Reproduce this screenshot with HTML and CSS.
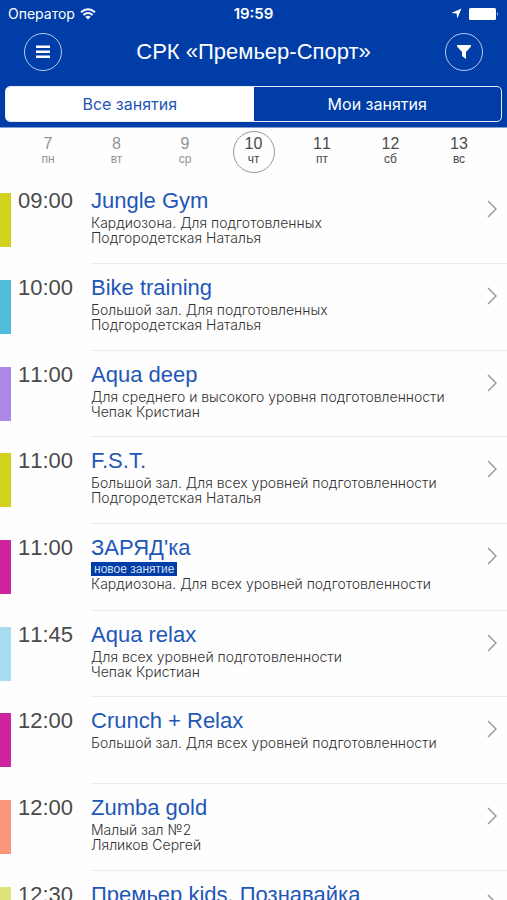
FILE: index.html
```html
<!DOCTYPE html>
<html lang="ru">
<head>
<meta charset="utf-8">
<meta name="viewport" content="width=device-width, initial-scale=1">
<title>СРК «Премьер-Спорт»</title>
<link rel="stylesheet" href="styles.css">
</head>
<body>
<header class="top">
  <div class="status">
    <div class="carrier"><span>Оператор</span>
      <svg width="16" height="12" viewBox="0 0 16 12" fill="none" stroke="#fff" stroke-width="2" aria-hidden="true"><path d="M1 4.3Q8-1.8 15 4.3M3.4 7Q8 3 12.600 7"/><path d="M5.300 8.800Q8 6.500 10.700 8.800L8 11.500Z" fill="#fff" stroke="none"/></svg>
    </div>
    <time class="clock">19:59</time>
    <div class="power">
      <svg width="11" height="11" viewBox="0 0 11 11" fill="#fff" aria-hidden="true"><path d="M10.500.5L6.300 10.500 5.600 5.400.3 4.900Z"/></svg>
      <svg width="30" height="12" viewBox="0 0 30 12" fill="#fff" aria-hidden="true"><rect width="27" height="12" rx="1.500"/><path d="M28 4Q29.800 6 28 8Z"/></svg>
    </div>
  </div>
  <div class="bar">
    <button class="round" aria-label="Меню"><svg width="16" height="14" viewBox="0 0 16 14" fill="#fff"><path d="M1 .5h14v2.500H1zM1 5.500h14v2.500H1zM1 10.500h14v2.500H1z"/></svg></button>
    <h1>СРК «Премьер-Спорт»</h1>
    <button class="round" aria-label="Фильтр"><svg width="16" height="16" viewBox="0 0 16 16" fill="#fff"><path d="M1 1h14v1.500L10 8v7l-4-3V8L1 2.500Z"/></svg></button>
  </div>
  <div class="tabs">
    <button class="tab active">Все занятия</button>
    <button class="tab">Мои занятия</button>
  </div>
</header>
<nav class="days" aria-label="Дни недели">
  <button class="day past"><b>7</b><span>пн</span></button>
  <button class="day past"><b>8</b><span>вт</span></button>
  <button class="day past"><b>9</b><span>ср</span></button>
  <button class="day current"><b>10</b><span>чт</span></button>
  <button class="day"><b>11</b><span>пт</span></button>
  <button class="day"><b>12</b><span>сб</span></button>
  <button class="day"><b>13</b><span>вс</span></button>
</nav>
<main class="list">
  <a href="#" class="row lime"><time>09:00</time><div class="info"><div><h2>Jungle Gym</h2><p>Кардиозона. Для подготовленных</p><p>Подгородетская Наталья</p></div><svg class="chev" viewBox="0 0 10 18"><path d="M1 1l8 8-8 8"/></svg></div></a>
  <a href="#" class="row cyan"><time>10:00</time><div class="info"><div><h2>Bike training</h2><p>Большой зал. Для подготовленных</p><p>Подгородетская Наталья</p></div><svg class="chev" viewBox="0 0 10 18"><path d="M1 1l8 8-8 8"/></svg></div></a>
  <a href="#" class="row violet"><time>11:00</time><div class="info"><div><h2>Aqua deep</h2><p>Для среднего и высокого уровня подготовленности</p><p>Чепак Кристиан</p></div><svg class="chev" viewBox="0 0 10 18"><path d="M1 1l8 8-8 8"/></svg></div></a>
  <a href="#" class="row lime"><time>11:00</time><div class="info"><div><h2>F.S.T.</h2><p>Большой зал. Для всех уровней подготовленности</p><p>Подгородетская Наталья</p></div><svg class="chev" viewBox="0 0 10 18"><path d="M1 1l8 8-8 8"/></svg></div></a>
  <a href="#" class="row magenta"><time>11:00</time><div class="info"><div><h2>ЗАРЯД'ка</h2><span class="badge">новое занятие</span><p>Кардиозона. Для всех уровней подготовленности</p></div><svg class="chev" viewBox="0 0 10 18"><path d="M1 1l8 8-8 8"/></svg></div></a>
  <a href="#" class="row sky"><time>11:45</time><div class="info"><div><h2>Aqua relax</h2><p>Для всех уровней подготовленности</p><p>Чепак Кристиан</p></div><svg class="chev" viewBox="0 0 10 18"><path d="M1 1l8 8-8 8"/></svg></div></a>
  <a href="#" class="row magenta"><time>12:00</time><div class="info"><div><h2>Crunch + Relax</h2><p>Большой зал. Для всех уровней подготовленности</p></div><svg class="chev" viewBox="0 0 10 18"><path d="M1 1l8 8-8 8"/></svg></div></a>
  <a href="#" class="row coral"><time>12:00</time><div class="info"><div><h2>Zumba gold</h2><p>Малый зал №2</p><p>Ляликов Сергей</p></div><svg class="chev" viewBox="0 0 10 18"><path d="M1 1l8 8-8 8"/></svg></div></a>
  <a href="#" class="row lemon"><time>12:30</time><div class="info"><div><h2>Премьер kids. Познавайка</h2></div><svg class="chev" viewBox="0 0 10 18"><path d="M1 1l8 8-8 8"/></svg></div></a>
</main>
</body>
</html>
```
FILE: styles.css
```css
* { box-sizing: border-box; margin: 0; padding: 0; }
html { height: 100%; }
body {
  display: flex;
  flex-direction: column;
  height: 100vh;
  overflow: hidden;
  background: #fefefe;
  color: #4a4a4a;
  font-family: "Liberation Sans", sans-serif;
}
button { border: 0; background: none; color: inherit; font: inherit; }
svg { display: block; }

.top { flex: none; padding: 0 5px 5px; background: #003da6; color: #fff; border-bottom: 1px solid #7f9ed2; }
.status {
  display: grid;
  grid-template-columns: 1fr auto 1fr;
  align-items: center;
  height: 27px;
  padding: 0 3px;
  font: 15px/16px Inter, sans-serif;
}
.carrier { display: flex; align-items: center; gap: 5px; font-size: 14px; }
.clock { font-weight: 600; }
.power { display: flex; align-items: center; justify-content: flex-end; gap: 7px; }
.bar { display: flex; align-items: center; justify-content: space-between; height: 59px; padding: 0 19px 9px; }
.bar h1 { font-size: 22px; line-height: 26px; font-weight: 400; }
.round {
  display: grid;
  place-items: center;
  width: 38px;
  height: 38px;
  border: 1px solid #b9caec;
  border-radius: 50%;
}
.tabs { display: flex; height: 36px; border: 1px solid #e6ecf8; border-radius: 5px; overflow: hidden; }
.tab { flex: 1; font: 16px/20px Inter, sans-serif; }
.tab.active { background: #fff; color: #1f55b3; }

.days { flex: none; display: flex; justify-content: space-between; padding: 3px 27px 4px; }
.day {
  display: flex;
  flex-direction: column;
  align-items: center;
  width: 42px;
  height: 42px;
  padding-top: 3px;
  border: 1px solid transparent;
  border-radius: 50%;
}
.day b { font-size: 16px; line-height: 17px; font-weight: 400; font-kerning: none; }
.day span { font-size: 12px; line-height: 15px; }
.day.past { color: #929292; }
.day.current { border-color: #999; }

.list { flex: 1; min-height: 0; overflow: hidden; }
.row {
  display: flex;
  align-items: flex-start;
  height: 87px;
  padding-top: 16px;
  color: inherit;
  text-decoration: none;
}
.row:nth-child(3n) { height: 86px; }
.row::before { content: ""; flex: none; width: 11px; height: 54px; background: var(--accent); }
.row time { width: 80px; flex: none; padding-left: 7px; font-size: 22px; line-height: 16px; font-kerning: none; }
.info {
  flex: 1;
  align-self: stretch;
  display: flex;
  align-items: flex-start;
  justify-content: space-between;
  padding-right: 10px;
  border-bottom: 1px solid #ececec;
}
.info h2 { margin-bottom: 6px; font-size: 22px; line-height: 16px; font-weight: 400; color: #1f57b8; white-space: nowrap; }
.info p { font: 300 14px/15px Inter, sans-serif; color: #333; white-space: nowrap; }
.badge { display: table; padding: 0 3px; background: #003da6; color: #d3def3; font-size: 12px; line-height: 14px; }
.chev { flex: none; width: 10px; height: 18px; margin-top: 7px; fill: none; stroke: #999; stroke-width: 1.5; }

.lime { --accent: #d0d21c; }
.cyan { --accent: #50bbdb; }
.violet { --accent: #ab87e6; }
.magenta { --accent: #cc259d; }
.sky { --accent: #a8ddf0; }
.coral { --accent: #f79679; }
.lemon { --accent: #e0e377; }
```
